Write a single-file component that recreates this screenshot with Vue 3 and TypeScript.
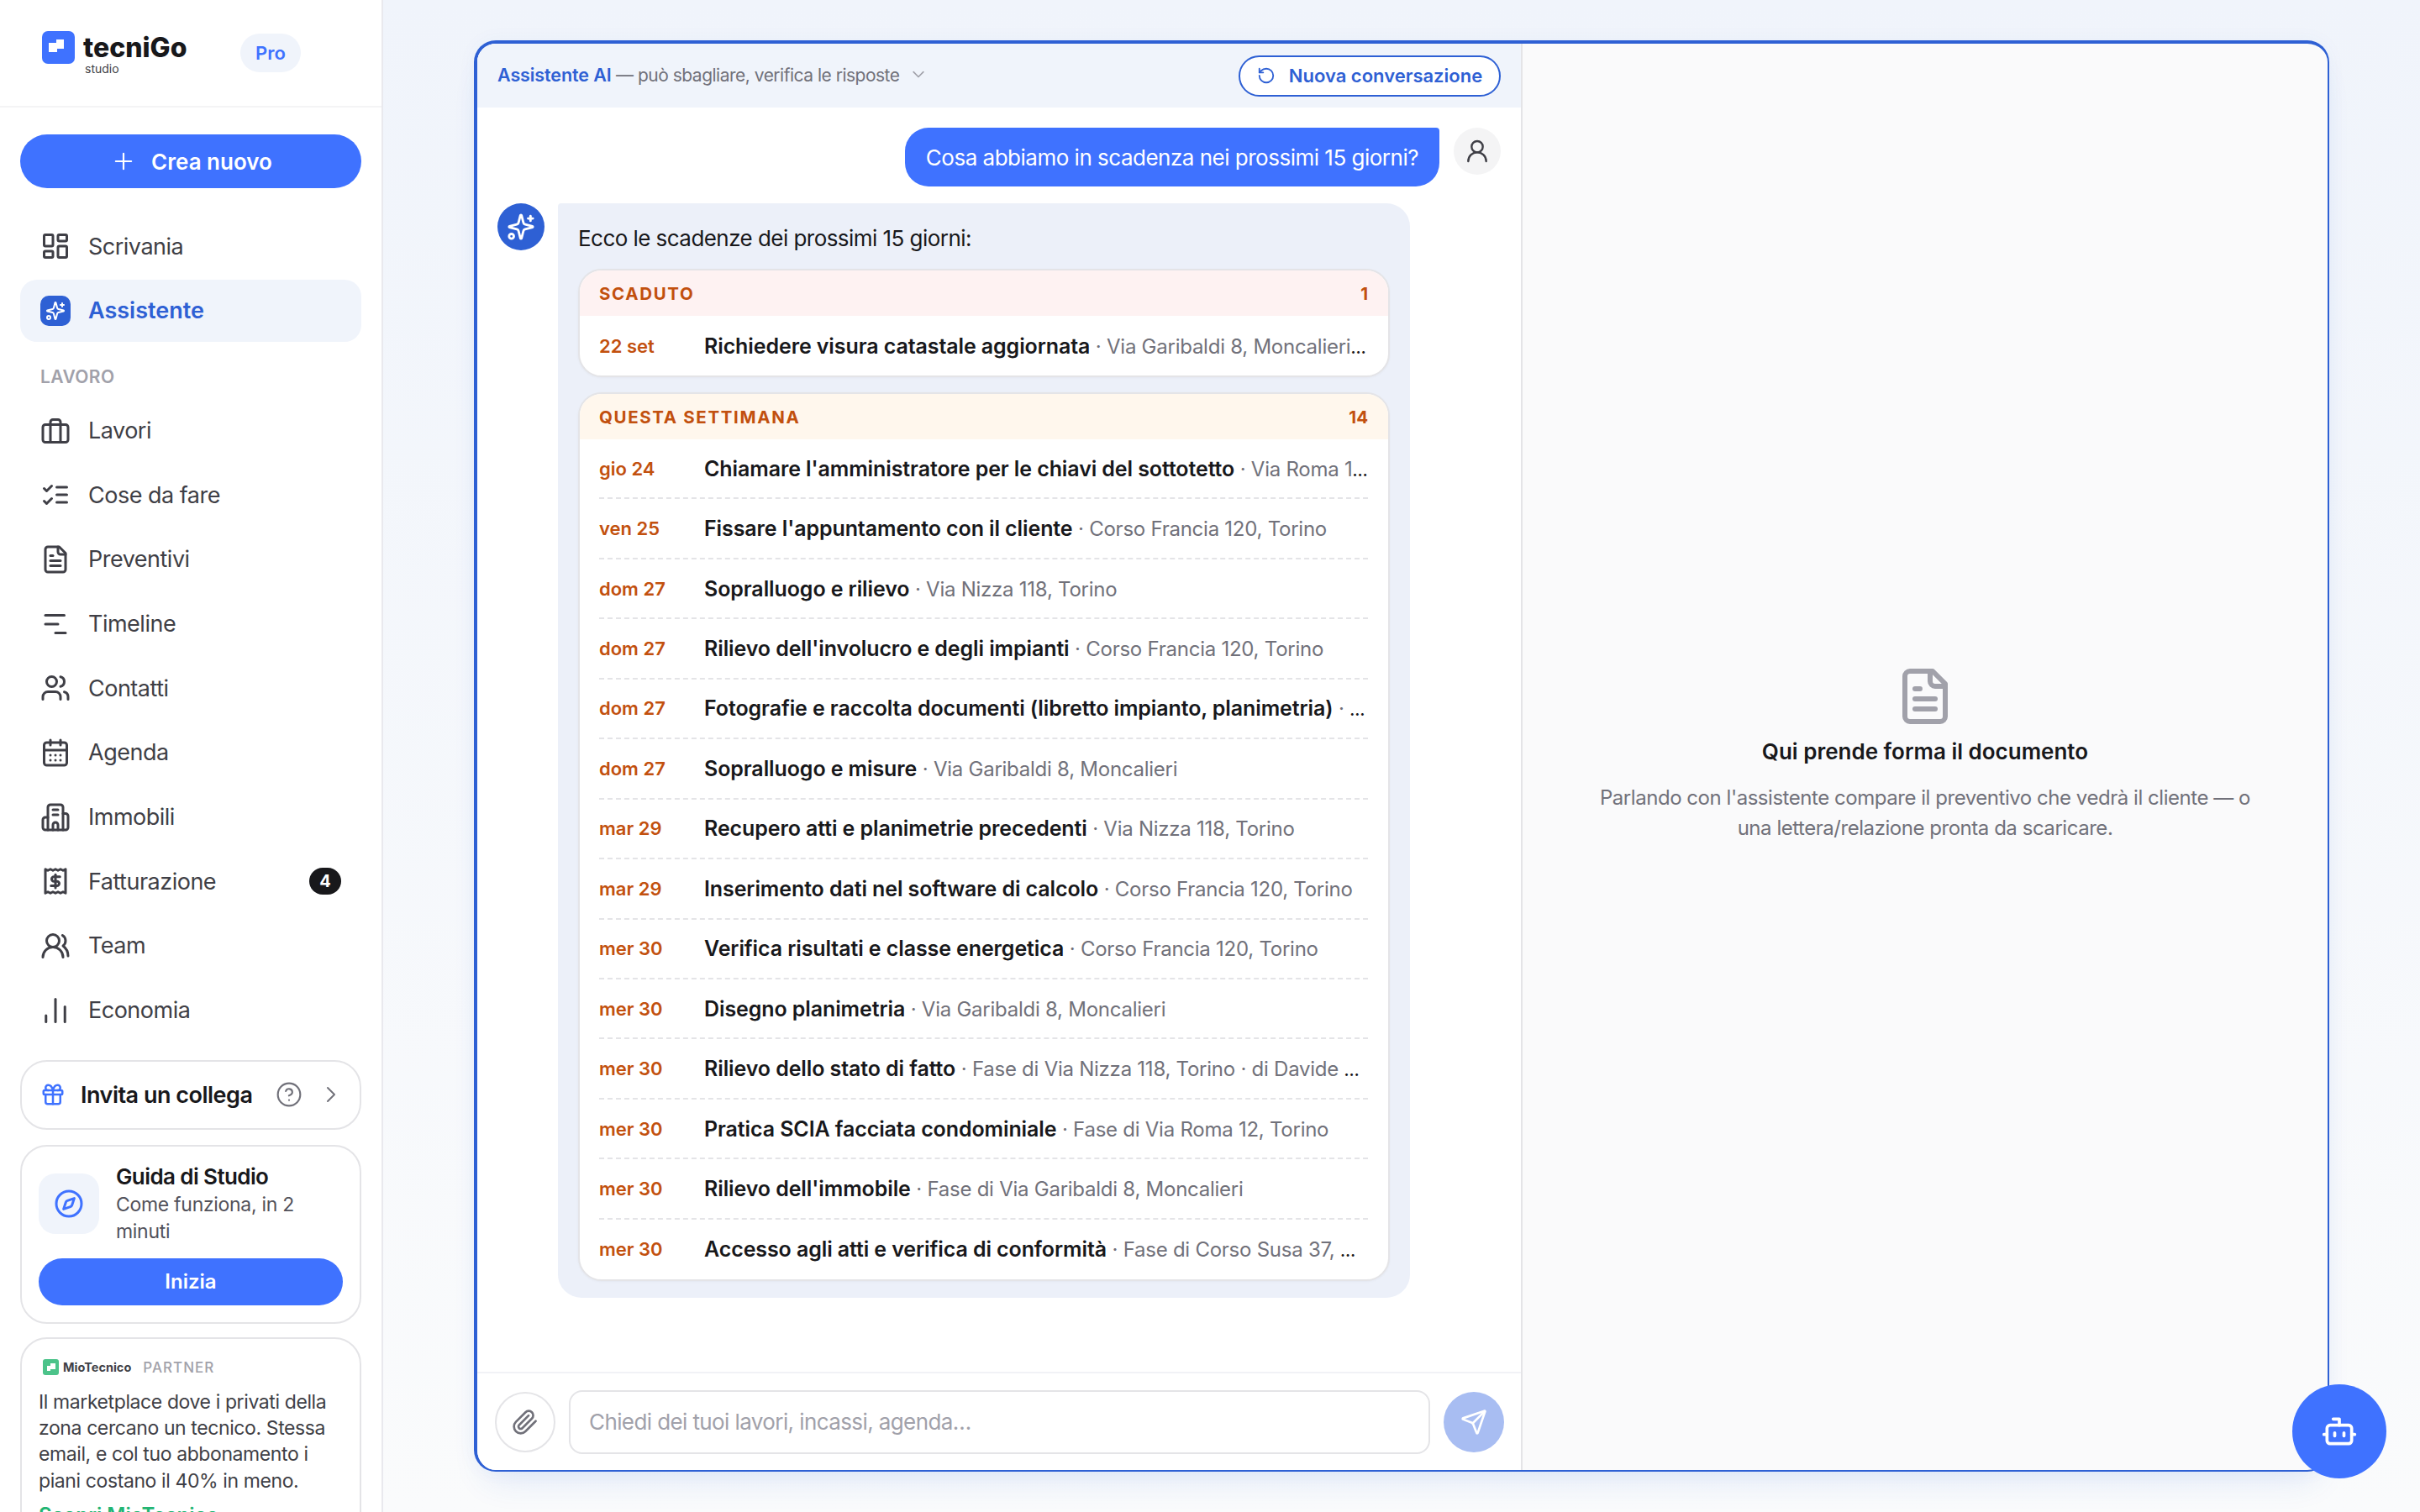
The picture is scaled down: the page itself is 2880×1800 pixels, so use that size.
<script setup lang="ts">
interface Row {
  date: string;
  task: string;
  place: string;
}

interface Group {
  key: string;
  title: string;
  count: number;
  rows: Row[];
}

// each nav icon is a list of 24x24 stroke paths
const navTop = [
  {
    label: "Scrivania",
    paths: [
      "M4 3h5a1 1 0 0 1 1 1v7a1 1 0 0 1-1 1H4a1 1 0 0 1-1-1V4a1 1 0 0 1 1-1Z",
      "M15 3h5a1 1 0 0 1 1 1v3a1 1 0 0 1-1 1h-5a1 1 0 0 1-1-1V4a1 1 0 0 1 1-1Z",
      "M15 12h5a1 1 0 0 1 1 1v7a1 1 0 0 1-1 1h-5a1 1 0 0 1-1-1v-7a1 1 0 0 1 1-1Z",
      "M4 16h5a1 1 0 0 1 1 1v3a1 1 0 0 1-1 1H4a1 1 0 0 1-1-1v-3a1 1 0 0 1 1-1Z",
    ],
  },
];

const sparkle = [
  "M9.937 15.5A2 2 0 0 0 8.5 14.063l-6.135-1.582a.5.5 0 0 1 0-.962L8.5 9.936A2 2 0 0 0 9.937 8.5l1.582-6.135a.5.5 0 0 1 .963 0L14.063 8.5A2 2 0 0 0 15.5 9.937l6.135 1.581a.5.5 0 0 1 0 .964L15.5 14.063a2 2 0 0 0-1.437 1.437l-1.582 6.135a.5.5 0 0 1-.963 0z",
  "M20 3v4",
  "M22 5h-4",
  "M6 20a2 2 0 1 1-4 0 2 2 0 0 1 4 0Z",
];

const fileText = [
  "M15 2H6a2 2 0 0 0-2 2v16a2 2 0 0 0 2 2h12a2 2 0 0 0 2-2V7Z",
  "M14 2v4a2 2 0 0 0 2 2h4",
  "M10 9H8",
  "M16 13H8",
  "M16 17H8",
];

const navWork = [
  {
    label: "Lavori",
    paths: [
      "M4 7h16a2 2 0 0 1 2 2v10a2 2 0 0 1-2 2H4a2 2 0 0 1-2-2V9a2 2 0 0 1 2-2Z",
      "M16 21V5a2 2 0 0 0-2-2h-4a2 2 0 0 0-2 2v16",
    ],
  },
  {
    label: "Cose da fare",
    paths: ["m3 17 2 2 4-4", "m3 7 2 2 4-4", "M13 6h8", "M13 12h8", "M13 18h8"],
  },
  { label: "Preventivi", paths: fileText },
  { label: "Timeline", paths: ["M4 5h15", "M4 12h10", "M12 19h8"] },
  {
    label: "Contatti",
    paths: [
      "M16 21v-2a4 4 0 0 0-4-4H6a4 4 0 0 0-4 4v2",
      "M16 3.128a4 4 0 0 1 0 7.744",
      "M22 21v-2a4 4 0 0 0-3-3.87",
      "M13 7a4 4 0 1 1-8 0 4 4 0 0 1 8 0Z",
    ],
  },
  {
    label: "Agenda",
    paths: [
      "M5 4h14a2 2 0 0 1 2 2v14a2 2 0 0 1-2 2H5a2 2 0 0 1-2-2V6a2 2 0 0 1 2-2Z",
      "M16 2v4",
      "M8 2v4",
      "M3 10h18",
      "M8 14h.01",
      "M12 14h.01",
      "M16 14h.01",
      "M8 18h.01",
      "M12 18h.01",
      "M16 18h.01",
    ],
  },
  {
    label: "Immobili",
    paths: [
      "M6 22V4a2 2 0 0 1 2-2h8a2 2 0 0 1 2 2v18Z",
      "M6 12H4a2 2 0 0 0-2 2v6a2 2 0 0 0 2 2h2",
      "M18 9h2a2 2 0 0 1 2 2v9a2 2 0 0 1-2 2h-2",
      "M10 6h4",
      "M10 10h4",
      "M10 22v-4a2 2 0 0 1 4 0v4",
    ],
  },
  {
    label: "Fatturazione",
    badge: 4,
    paths: [
      "M4 2.5l2 1 2-1 2 1 2-1 2 1 2-1 2 1 2-1v19l-2-1-2 1-2-1-2 1-2-1-2 1-2-1-2 1Z",
      "M15.5 8.5H10.8a1.8 1.8 0 0 0 0 3.6h2.4a1.8 1.8 0 0 1 0 3.6H8.5",
      "M12 6.8v10.6",
    ],
  },
  {
    label: "Team",
    paths: [
      "M18 21a8 8 0 0 0-16 0",
      "M15 8a5 5 0 1 1-10 0 5 5 0 0 1 10 0Z",
      "M22 20c0-3.37-2-6.5-4-8a5 5 0 0 0-.45-8.3",
    ],
  },
  { label: "Economia", paths: ["M4.5 21v-5", "M12 21V3", "M19.5 21V9"] },
];

const groups: Group[] = [
  {
    key: "late",
    title: "SCADUTO",
    count: 1,
    rows: [
      { date: "22 set", task: "Richiedere visura catastale aggiornata", place: "Via Garibaldi 8, Moncalieri · di Davide Ferrero" },
    ],
  },
  {
    key: "week",
    title: "QUESTA SETTIMANA",
    count: 14,
    rows: [
      { date: "gio 24", task: "Chiamare l'amministratore per le chiavi del sottotetto", place: "Via Roma 12, Torino" },
      { date: "ven 25", task: "Fissare l'appuntamento con il cliente", place: "Corso Francia 120, Torino" },
      { date: "dom 27", task: "Sopralluogo e rilievo", place: "Via Nizza 118, Torino" },
      { date: "dom 27", task: "Rilievo dell'involucro e degli impianti", place: "Corso Francia 120, Torino" },
      { date: "dom 27", task: "Fotografie e raccolta documenti (libretto impianto, planimetria)", place: "Corso Francia 120, Torino" },
      { date: "dom 27", task: "Sopralluogo e misure", place: "Via Garibaldi 8, Moncalieri" },
      { date: "mar 29", task: "Recupero atti e planimetrie precedenti", place: "Via Nizza 118, Torino" },
      { date: "mar 29", task: "Inserimento dati nel software di calcolo", place: "Corso Francia 120, Torino" },
      { date: "mer 30", task: "Verifica risultati e classe energetica", place: "Corso Francia 120, Torino" },
      { date: "mer 30", task: "Disegno planimetria", place: "Via Garibaldi 8, Moncalieri" },
      { date: "mer 30", task: "Rilievo dello stato di fatto", place: "Fase di Via Nizza 118, Torino · di Davide Ferrero" },
      { date: "mer 30", task: "Pratica SCIA facciata condominiale", place: "Fase di Via Roma 12, Torino" },
      { date: "mer 30", task: "Rilievo dell'immobile", place: "Fase di Via Garibaldi 8, Moncalieri" },
      { date: "mer 30", task: "Accesso agli atti e verifica di conformità", place: "Fase di Corso Susa 37, Rivoli" },
    ],
  },
];
</script>

<template>
  <div class="app">
    <aside class="sidebar">
      <div class="brand">
        <div class="logo">
          <svg class="logo-mark" viewBox="0 0 39 39">
            <rect width="39" height="39" rx="7" fill="#3f72ff" />
            <path d="M17 10h9v11h-8v4H8V14h9Z" fill="#fff" />
          </svg>
          <div class="logo-text">
            <span class="logo-name">tecniGo</span>
            <span class="logo-sub">studio</span>
          </div>
        </div>
        <span class="pro">Pro</span>
      </div>

      <div class="side-body">
        <button class="create">
          <svg class="ic-plus" viewBox="0 0 24 24"><path d="M12 2v20M2 12h20" /></svg>
          Crea nuovo
        </button>

        <nav class="nav nav-top">
          <a v-for="item in navTop" :key="item.label" class="nav-item">
            <svg class="ic" viewBox="0 0 24 24"><path v-for="d in item.paths" :key="d" :d="d" /></svg>
            {{ item.label }}
          </a>
          <a class="nav-item active">
            <span class="ic-box">
              <svg viewBox="0 0 24 24"><path v-for="d in sparkle" :key="d" :d="d" /></svg>
            </span>
            Assistente
          </a>
        </nav>

        <div class="nav-label">LAVORO</div>

        <nav class="nav">
          <a v-for="item in navWork" :key="item.label" class="nav-item">
            <svg class="ic" viewBox="0 0 24 24"><path v-for="d in item.paths" :key="d" :d="d" /></svg>
            {{ item.label }}
            <span v-if="item.badge" class="badge">{{ item.badge }}</span>
          </a>
        </nav>

        <div class="invite">
          <svg class="ic-gift" viewBox="0 0 24 24">
            <rect x="3" y="8" width="18" height="4" rx="1" />
            <path d="M12 8v13" />
            <path d="M19 12v7a2 2 0 0 1-2 2H7a2 2 0 0 1-2-2v-7" />
            <path d="M7.5 8a2.5 2.5 0 0 1 0-5A4.8 8 0 0 1 12 8a4.8 8 0 0 1 4.5-5 2.5 2.5 0 0 1 0 5" />
          </svg>
          <span class="invite-text">Invita un collega</span>
          <svg class="ic-help" viewBox="0 0 24 24">
            <circle cx="12" cy="12" r="10" />
            <path d="M9.09 9a3 3 0 0 1 5.83 1c0 2-3 3-3 3" />
            <path d="M12 17h.01" />
          </svg>
          <svg class="ic-chev" viewBox="0 0 12 20"><path d="m2 2 8 8-8 8" /></svg>
        </div>

        <div class="guide">
          <div class="guide-top">
            <span class="guide-icon">
              <svg viewBox="0 0 24 24">
                <circle cx="12" cy="12" r="10" />
                <path d="m16.24 7.76-1.804 5.411a2 2 0 0 1-1.265 1.265L7.76 16.24l1.804-5.411a2 2 0 0 1 1.265-1.265z" />
              </svg>
            </span>
            <div class="guide-copy">
              <div class="guide-title">Guida di Studio</div>
              <div class="guide-desc">Come funziona, in 2 minuti</div>
            </div>
          </div>
          <button class="guide-btn">Inizia</button>
        </div>

        <div class="partner">
          <div class="partner-head">
            <svg class="partner-mark" viewBox="0 0 19 19">
              <rect width="19" height="19" rx="3" fill="#4cc38a" />
              <path d="M9 5h6v7H9v2H5V8h4Z" fill="#fff" />
            </svg>
            <span class="partner-name">MioTecnico</span>
            <span class="partner-tag">PARTNER</span>
          </div>
          <p class="partner-text">
            Il marketplace dove i privati della zona cercano un tecnico. Stessa email, e col tuo abbonamento i piani costano il 40% in meno.
          </p>
          <a class="partner-link">Scopri MioTecnico</a>
        </div>
      </div>
    </aside>

    <main class="main">
      <section class="panel">
        <div class="chat">
          <header class="chat-head">
            <div class="chat-note">
              <span><strong>Assistente AI</strong> — può sbagliare, verifica le risposte</span>
              <svg class="ic-down" viewBox="0 0 24 24"><path d="m5 8 7 7 7-7" /></svg>
            </div>
            <button class="new-chat">
              <svg viewBox="0 0 24 24">
                <path d="M3 12a9 9 0 1 0 9-9 9.75 9.75 0 0 0-6.74 2.74L3 8" />
                <path d="M3 3v5h5" />
              </svg>
              Nuova conversazione
            </button>
          </header>

          <div class="messages">
            <div class="msg-user">
              <div class="bubble-user">Cosa abbiamo in scadenza nei prossimi 15 giorni?</div>
              <span class="avatar-user">
                <svg viewBox="0 0 24 24">
                  <circle cx="12" cy="8" r="5" />
                  <path d="M20 21a8 8 0 0 0-16 0" />
                </svg>
              </span>
            </div>

            <div class="msg-ai">
              <span class="avatar-ai">
                <svg viewBox="0 0 24 24"><path v-for="d in sparkle" :key="d" :d="d" /></svg>
              </span>
              <div class="bubble-ai">
                <p class="intro">Ecco le scadenze dei prossimi 15 giorni:</p>
                <div v-for="group in groups" :key="group.key" class="group" :class="group.key">
                  <div class="group-head">
                    <span class="group-title">{{ group.title }}</span>
                    <span>{{ group.count }}</span>
                  </div>
                  <div v-for="(row, i) in group.rows" :key="i" class="row">
                    <span class="row-date">{{ row.date }}</span>
                    <span class="row-text"><span class="row-task">{{ row.task }}</span><span class="row-place"> · {{ row.place }}</span></span>
                  </div>
                </div>
              </div>
            </div>
          </div>

          <footer class="composer">
            <button class="attach">
              <svg viewBox="0 0 24 24">
                <path d="m21.44 11.05-9.19 9.19a6 6 0 0 1-8.49-8.49l8.57-8.57A4 4 0 1 1 18 8.84l-8.59 8.57a2 2 0 0 1-2.83-2.83l8.49-8.48" />
              </svg>
            </button>
            <div class="field">Chiedi dei tuoi lavori, incassi, agenda…</div>
            <button class="send">
              <svg viewBox="0 0 24 24">
                <path d="M14.536 21.686a.5.5 0 0 0 .937-.024l6.5-19a.496.496 0 0 0-.635-.635l-19 6.5a.5.5 0 0 0-.024.937l7.93 3.18a2 2 0 0 1 1.112 1.11z" />
                <path d="m21.854 2.147-10.94 10.939" />
              </svg>
            </button>
          </footer>
        </div>

        <div class="doc">
          <svg class="doc-icon" viewBox="0 0 24 24"><path v-for="d in fileText" :key="d" :d="d" /></svg>
          <h2 class="doc-title">Qui prende forma il documento</h2>
          <p class="doc-text">
            Parlando con l'assistente compare il preventivo che vedrà il cliente — o una lettera/relazione pronta da scaricare.
          </p>
        </div>
      </section>
    </main>

    <button class="fab">
      <svg viewBox="0 0 24 24">
        <path d="M12 8V4H8" />
        <rect x="4" y="8" width="16" height="12" rx="2" />
        <path d="M2 14h2" />
        <path d="M20 14h2" />
        <path d="M15 13v2" />
        <path d="M9 13v2" />
      </svg>
    </button>
  </div>
</template>

<style scoped>
.app {
  position: relative;
  display: flex;
  width: 2880px;
  height: 1800px;
  overflow: hidden;
  background: linear-gradient(180deg, #f0f4fb 0%, #fafbfc 100%);
  font-family: Inter, "Liberation Sans", sans-serif;
  color: #18181b;
}

svg {
  fill: none;
  stroke: currentColor;
  stroke-linecap: round;
  stroke-linejoin: round;
  stroke-width: 2;
  flex: none;
}

button {
  font-family: inherit;
  border: none;
  padding: 0;
}

/* sidebar */
.sidebar {
  width: 456px;
  flex: none;
  box-sizing: border-box;
  background: #fff;
  border-right: 2px solid #e9e9ee;
  display: flex;
  flex-direction: column;
}

.brand {
  height: 128px;
  flex: none;
  box-sizing: border-box;
  border-bottom: 2px solid #f4f4f5;
  position: relative;
}

.logo {
  display: flex;
  gap: 10px;
  padding: 37px 0 0 50px;
}

.logo-mark {
  width: 39px;
  height: 39px;
  stroke: none;
}

.logo-text {
  display: flex;
  flex-direction: column;
}

.logo-name {
  font-size: 32px;
  font-weight: 800;
  line-height: 34px;
  margin-top: 3px;
  color: #18181b;
}

.logo-sub {
  font-size: 14px;
  line-height: 16px;
  margin-left: 2px;
  color: #3f3f46;
}

.pro {
  position: absolute;
  left: 286px;
  top: 40px;
  width: 72px;
  height: 46px;
  border-radius: 23px;
  background: #f0f4fb;
  color: #3f72ff;
  font-size: 22px;
  font-weight: 600;
  display: flex;
  align-items: center;
  justify-content: center;
}

.side-body {
  padding: 32px 24px 0;
  display: flex;
  flex-direction: column;
}

.create {
  height: 64px;
  border-radius: 32px;
  background: #3f72ff;
  color: #fff;
  font-size: 26px;
  font-weight: 600;
  display: flex;
  align-items: center;
  justify-content: center;
  gap: 22px;
  padding-left: 6px;
}

.ic-plus {
  width: 22px;
  height: 22px;
  stroke-width: 2.4;
}

.nav {
  display: flex;
  flex-direction: column;
  gap: 2.67px;
}

.nav-top {
  margin-top: 32px;
}

.nav-item {
  height: 74px;
  display: flex;
  align-items: center;
  gap: 21px;
  padding: 0 24px;
  border-radius: 20px;
  font-size: 27px;
  letter-spacing: -0.5px;
  color: #3f3f46;
}

.nav-item.active {
  background: #f0f4fb;
  color: #2e60d4;
  font-weight: 600;
  letter-spacing: 0;
}

.ic {
  width: 36px;
  height: 36px;
  color: #3f3f46;
}

.ic-box {
  width: 36px;
  height: 36px;
  border-radius: 10px;
  background: #2e60d4;
  color: #fff;
  display: flex;
  align-items: center;
  justify-content: center;
}

.ic-box svg {
  width: 24px;
  height: 24px;
}

.badge {
  margin-left: auto;
  min-width: 38px;
  height: 32px;
  border-radius: 16px;
  background: #18181b;
  color: #fff;
  font-size: 20px;
  font-weight: 700;
  letter-spacing: 0;
  display: flex;
  align-items: center;
  justify-content: center;
}

.nav-label {
  margin: 24px 0 9px 24px;
  height: 36px;
  line-height: 36px;
  font-size: 21px;
  font-weight: 600;
  letter-spacing: 0.02em;
  color: #a1a1aa;
}

.invite {
  margin-top: 22px;
  height: 83px;
  flex: none;
  box-sizing: border-box;
  border: 2px solid #e4e4e7;
  border-radius: 32px;
  display: flex;
  align-items: center;
  padding: 0 28px 0 22px;
}

.ic-gift {
  width: 30px;
  height: 30px;
  color: #3f72ff;
}

.invite-text {
  margin-left: 18px;
  font-size: 27px;
  font-weight: 600;
  letter-spacing: -0.5px;
}

.ic-help {
  margin-left: auto;
  width: 32px;
  height: 32px;
  color: #71717a;
  stroke-width: 1.6;
}

.ic-chev {
  margin-left: 28px;
  width: 12px;
  height: 20px;
  color: #71717a;
  stroke-width: 2;
}

.guide {
  margin-top: 18px;
  height: 213px;
  flex: none;
  box-sizing: border-box;
  border: 2px solid #e4e4e7;
  border-radius: 32px;
  padding: 20px 20px 20px;
}

.guide-top {
  display: flex;
  gap: 20px;
  height: 113px;
  align-items: flex-start;
}

.guide-icon {
  width: 72px;
  height: 72px;
  margin-top: 12px;
  flex: none;
  border-radius: 20px;
  background: #f0f4fb;
  color: #3f72ff;
  display: flex;
  align-items: center;
  justify-content: center;
}

.guide-icon svg {
  width: 36px;
  height: 36px;
}

.guide-title {
  font-size: 26px;
  font-weight: 600;
  line-height: 32px;
  letter-spacing: -0.6px;
}

.guide-desc {
  margin-top: 1px;
  font-size: 23px;
  line-height: 32px;
  letter-spacing: -0.3px;
  color: #52525b;
}

.guide-btn {
  display: block;
  width: 100%;
  height: 56px;
  border-radius: 28px;
  background: #3f72ff;
  color: #fff;
  font-size: 24px;
  font-weight: 600;
}

.partner {
  margin-top: 16px;
  border: 2px solid #e4e4e7;
  border-radius: 32px;
  padding: 22px 20px 20px;
}

.partner-head {
  display: flex;
  align-items: center;
  height: 24px;
  padding-left: 5px;
}

.partner-mark {
  width: 19px;
  height: 19px;
  stroke: none;
}

.partner-name {
  margin-left: 5px;
  font-size: 14.5px;
  font-weight: 700;
  color: #3f3f46;
}

.partner-tag {
  margin-left: 14px;
  font-size: 17px;
  font-weight: 500;
  letter-spacing: 0.06em;
  color: #a1a1aa;
}

.partner-text {
  margin: 14px 0 0;
  font-size: 23px;
  line-height: 31.4px;
  letter-spacing: -0.4px;
  color: #3f3f46;
}

.partner-link {
  display: block;
  margin-top: 10px;
  font-size: 24px;
  font-weight: 600;
  color: #22b573;
}

/* main panel */
.main {
  flex: 1;
  min-width: 0;
  padding: 48px 108px;
  display: flex;
}

.panel {
  flex: 1;
  display: flex;
  min-width: 0;
  box-sizing: border-box;
  background: #fafafb;
  border: solid #2e60d4;
  border-width: 4px 2px 2px 4px;
  border-radius: 26px;
  overflow: hidden;
  box-shadow: 0 24px 40px -16px rgba(46, 96, 212, 0.14), 0 0 24px rgba(46, 96, 212, 0.04);
}

.chat {
  width: 1244px;
  flex: none;
  box-sizing: border-box;
  background: #fff;
  border-right: 2px solid #e4e4e7;
  display: flex;
  flex-direction: column;
}

.chat-head {
  height: 76px;
  flex: none;
  background: #f0f4fb;
  display: flex;
  align-items: center;
  justify-content: space-between;
  padding: 0 24px;
}

.chat-note {
  display: flex;
  align-items: center;
  padding-bottom: 2px;
  font-size: 21px;
  letter-spacing: -0.5px;
  color: #71717a;
}

.chat-note strong {
  color: #2e60d4;
  font-weight: 600;
  font-size: 21.5px;
  letter-spacing: -0.1px;
}

.ic-down {
  width: 20px;
  height: 20px;
  margin-left: 12px;
  color: #a1a1aa;
}

.new-chat {
  width: 312px;
  height: 49px;
  box-sizing: border-box;
  border: 2px solid #2e60d4;
  border-radius: 25px;
  background: #fff;
  color: #2e60d4;
  font-size: 22px;
  font-weight: 600;
  display: flex;
  align-items: center;
  justify-content: center;
  gap: 16px;
}

.new-chat svg {
  width: 22px;
  height: 22px;
}

.messages {
  flex: 1;
  min-height: 0;
  padding: 24px 24px 0;
  display: flex;
  flex-direction: column;
  gap: 20px;
  overflow: hidden;
}

.msg-user {
  display: flex;
  justify-content: flex-end;
  align-items: flex-start;
  gap: 17px;
}

.bubble-user {
  height: 70px;
  box-sizing: border-box;
  padding: 0 25px;
  display: flex;
  align-items: center;
  background: #3f72ff;
  border-radius: 28px 4px 28px 28px;
  color: #fff;
  font-size: 26px;
  letter-spacing: -0.5px;
}

.avatar-user {
  width: 56px;
  height: 56px;
  flex: none;
  border-radius: 50%;
  background: #f4f4f5;
  color: #3f3f46;
  display: flex;
  align-items: center;
  justify-content: center;
}

.avatar-user svg {
  width: 32px;
  height: 32px;
  stroke-width: 1.8;
}

.msg-ai {
  display: flex;
  align-items: flex-start;
  gap: 16px;
}

.avatar-ai {
  width: 56px;
  height: 56px;
  flex: none;
  border-radius: 50%;
  background: #2e60d4;
  color: #fff;
  display: flex;
  align-items: center;
  justify-content: center;
}

.avatar-ai svg {
  width: 34px;
  height: 34px;
}

.bubble-ai {
  width: 1014px;
  box-sizing: border-box;
  padding: 24px 24px 20px;
  background: #ecf0f9;
  border-radius: 4px 28px 28px 28px;
  display: flex;
  flex-direction: column;
  gap: 18px;
}

.intro {
  margin: 0;
  font-size: 26px;
  line-height: 36px;
  letter-spacing: -0.55px;
  color: #18181b;
}

.group {
  background: #fff;
  border: 2px solid #e4e4e7;
  border-radius: 28px;
  overflow: hidden;
  box-shadow: 0 1px 3px rgba(0, 0, 0, 0.04);
}

.group-head {
  height: 54px;
  display: flex;
  align-items: center;
  justify-content: space-between;
  padding: 0 24px 0 23px;
  font-size: 20.5px;
  font-weight: 700;
  color: #c2500e;
}

.group-title {
  letter-spacing: 0.08em;
}

.late .group-head {
  background: #fef2f2;
}

.week .group-head {
  background: #fff7ed;
}

.row {
  height: 71.45px;
  box-sizing: border-box;
  margin: 0 24px 0 23px;
  border-bottom: 2px dashed #e4e4e7;
  display: flex;
  align-items: center;
}

.row:last-child {
  height: 71px;
  border-bottom: none;
}

.row-date {
  width: 125px;
  flex: none;
  font-size: 22px;
  font-weight: 600;
  color: #c2500e;
}

/* smaller font here so the overflow ellipsis stays tight, as in the design */
.row-text {
  flex: 1;
  min-width: 0;
  font-size: 19px;
  font-weight: 600;
  color: #18181b;
  white-space: nowrap;
  overflow: hidden;
  text-overflow: ellipsis;
}

.row-task {
  font-size: 25px;
  letter-spacing: -0.1px;
}

.row-place {
  font-size: 24px;
  font-weight: 400;
  letter-spacing: -0.25px;
  color: #71717a;
}

.composer {
  height: 117px;
  flex: none;
  box-sizing: border-box;
  border-top: 2px solid #f1f2f6;
  display: flex;
  align-items: center;
  gap: 16px;
  padding: 0 20px 0 21px;
}

.attach {
  width: 72px;
  height: 72px;
  flex: none;
  box-sizing: border-box;
  border: 2px solid #e4e4e7;
  border-radius: 50%;
  background: #fff;
  color: #71717a;
  display: flex;
  align-items: center;
  justify-content: center;
}

.attach svg {
  width: 32px;
  height: 32px;
}

.field {
  flex: 1;
  height: 76px;
  box-sizing: border-box;
  border: 2px solid #e4e4e7;
  border-radius: 16px;
  padding: 0 22px;
  display: flex;
  align-items: center;
  font-size: 26px;
  letter-spacing: -0.6px;
  color: #a1a1aa;
}

.send {
  width: 72px;
  height: 72px;
  flex: none;
  border-radius: 50%;
  background: #a8bdf2;
  color: #fff;
  display: flex;
  align-items: center;
  justify-content: center;
}

.send svg {
  width: 32px;
  height: 32px;
}

.doc {
  flex: 1;
  min-width: 0;
  display: flex;
  flex-direction: column;
  align-items: center;
  padding-top: 741px;
}

.doc-icon {
  width: 72px;
  height: 72px;
  color: #a1a1aa;
}

.doc-title {
  margin: 12px 0 0;
  font-size: 26px;
  line-height: 36px;
  font-weight: 600;
  color: #18181b;
}

.doc-text {
  margin: 19px 0 0;
  width: 790px;
  text-align: center;
  font-size: 24px;
  line-height: 36px;
  letter-spacing: -0.46px;
  color: #71717a;
}

.fab {
  position: absolute;
  left: 2728px;
  top: 1648px;
  width: 112px;
  height: 112px;
  border-radius: 50%;
  background: #3f72ff;
  color: #fff;
  display: flex;
  align-items: center;
  justify-content: center;
}

.fab svg {
  width: 44px;
  height: 44px;
}
</style>

<style>
html,
body {
  margin: 0;
  background: #fff;
}
</style>
